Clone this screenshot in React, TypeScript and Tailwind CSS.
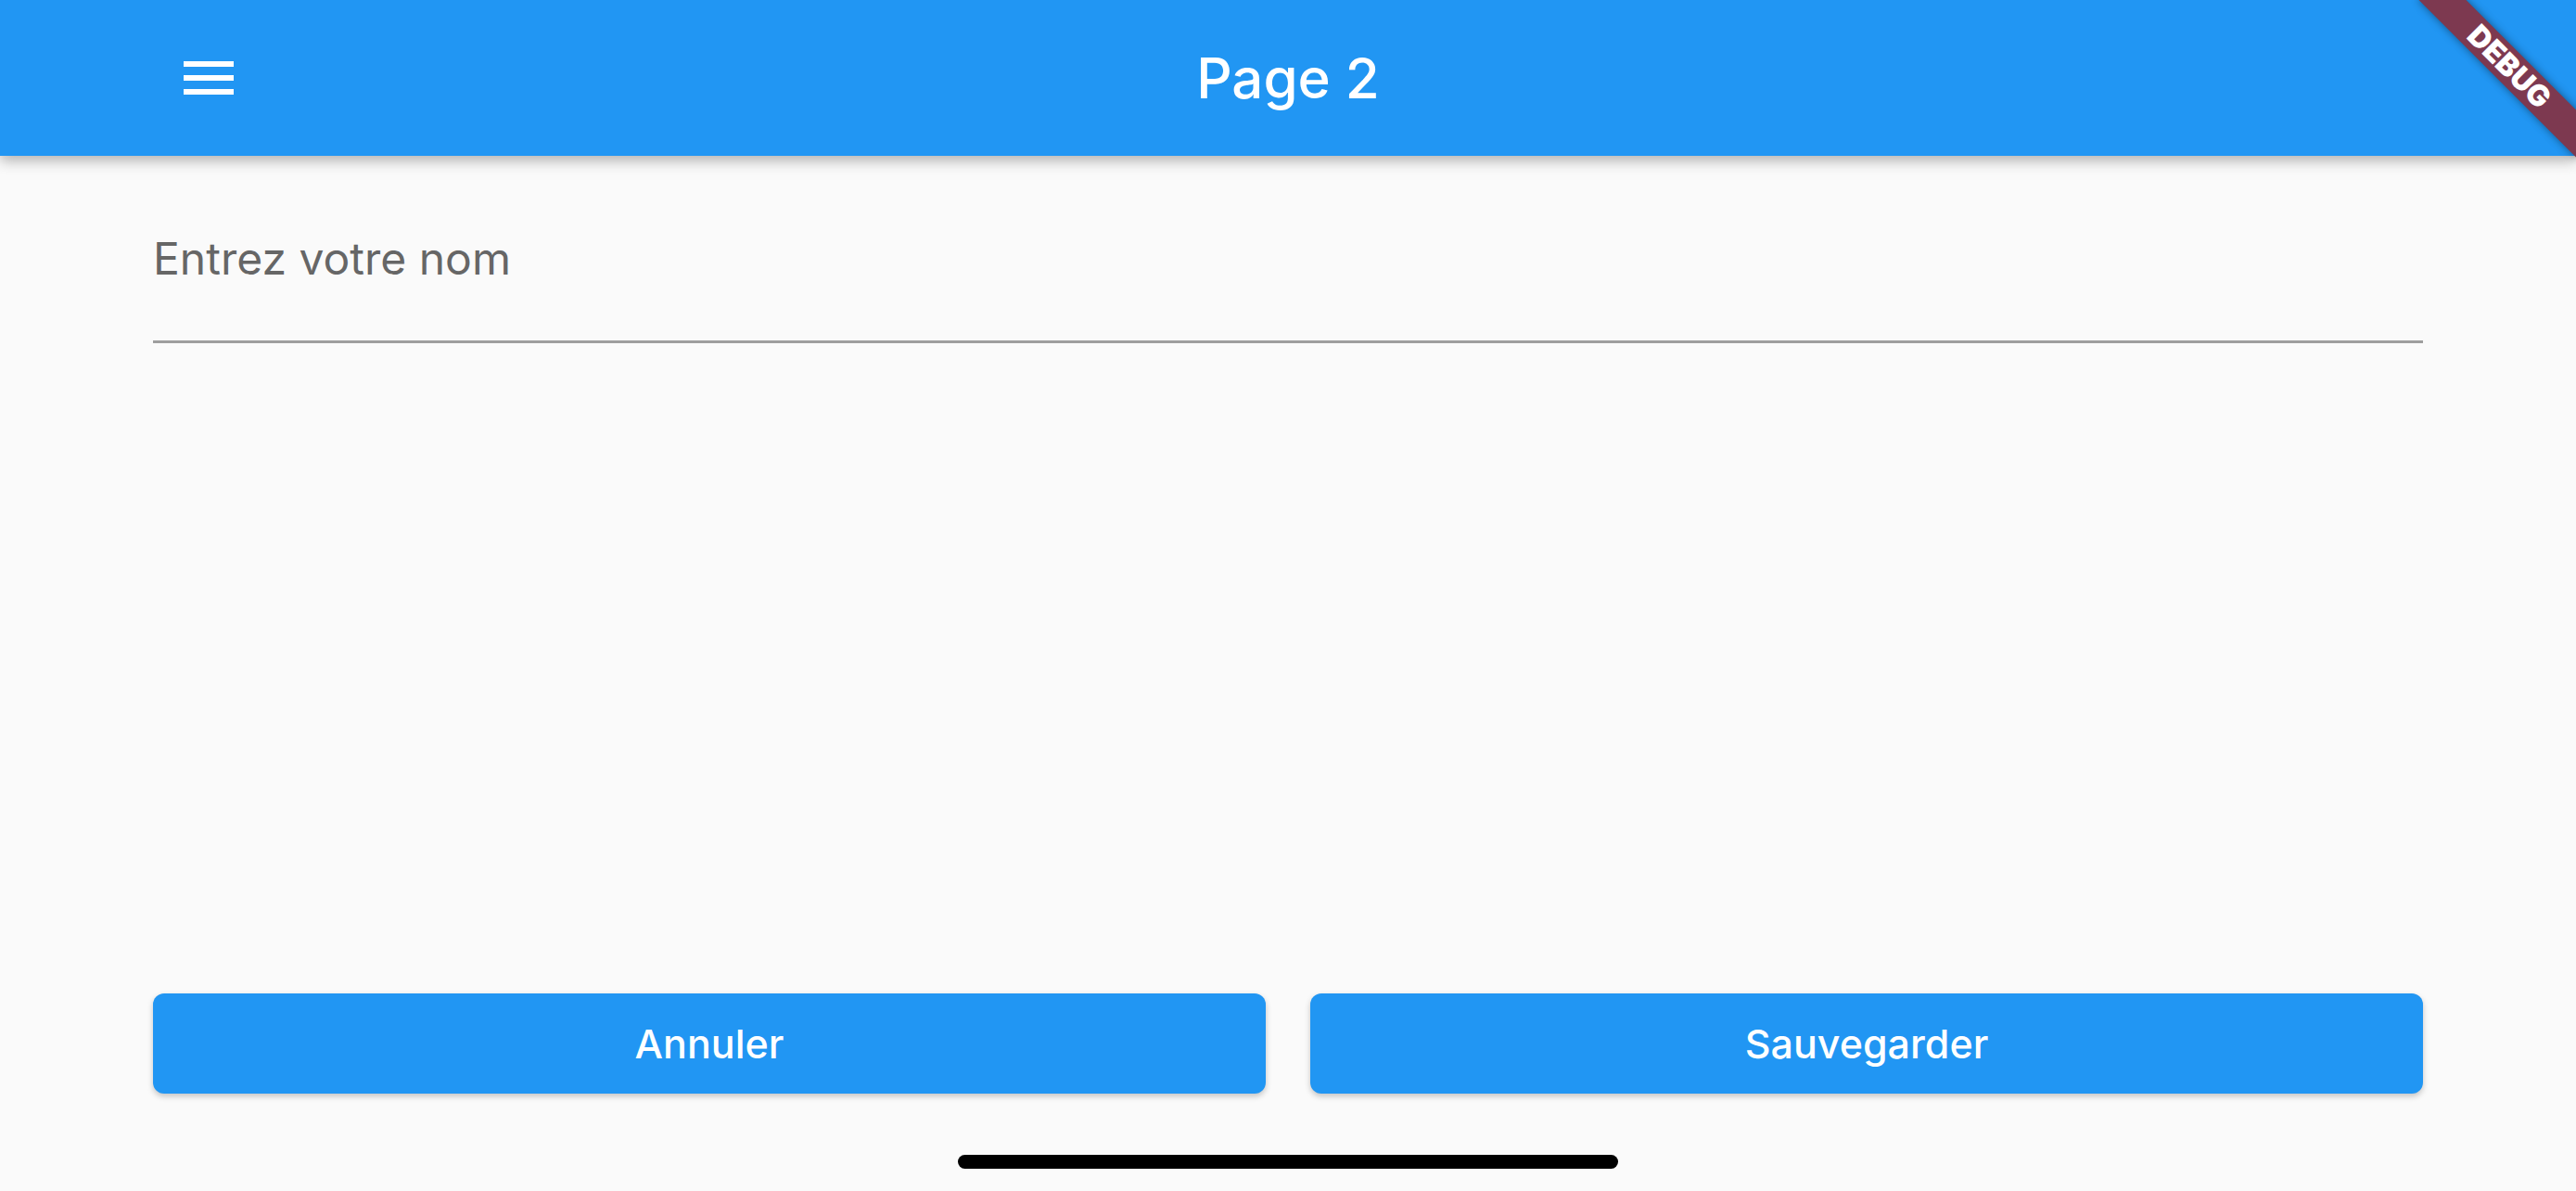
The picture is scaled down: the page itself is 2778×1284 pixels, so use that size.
const MenuIcon = () => (
  <svg width="72" height="72" viewBox="0 0 24 24" fill="#ffffff">
    <path d="M3 18h18v-2H3v2zm0-5h18v-2H3v2zm0-7v2h18V6H3z" />
  </svg>
);

export default function App() {
  return (
    <div className="relative flex h-[1284px] w-[2778px] flex-col overflow-hidden bg-[#fafafa] font-['Inter','Noto_Sans',sans-serif]">
      {/* App bar */}
      <header className="relative z-10 grid h-[168px] shrink-0 grid-cols-[1fr_auto_1fr] items-center bg-[#2196f3] shadow-[0_5px_14px_rgba(0,0,0,0.3)]">
        <div className="flex items-center pl-[189px]">
          <MenuIcon />
        </div>
        <h1 className="text-[60px] font-medium leading-[60px] text-white">Page 2</h1>
        <div />
      </header>

      {/* Debug ribbon */}
      <div className="absolute right-[-48px] top-[54px] z-20 flex h-[36px] w-[240px] rotate-45 items-center justify-center bg-[#7d3950] shadow-[0_0_10px_rgba(0,0,0,0.45)]">
        <span className="text-[32px] font-black leading-none text-white">DEBUG</span>
      </div>

      {/* Body */}
      <main className="flex flex-1 flex-col px-[165px]">
        <div className="border-b-[3px] border-[#9e9e9e] pb-[59px] pt-[82px]">
          <div className="text-[48px] leading-[58px] text-[#666666]">Entrez votre nom</div>
        </div>

        <div className="flex-1" />

        <div className="grid h-[108px] grid-cols-2 gap-[48px]">
          <button className="flex items-center justify-center rounded-[12px] bg-[#2196f3] text-[43px] font-medium text-white shadow-[0_3px_6px_rgba(0,0,0,0.22)]">
            Annuler
          </button>
          <button className="flex items-center justify-center rounded-[12px] bg-[#2196f3] text-[43px] font-medium text-white shadow-[0_3px_6px_rgba(0,0,0,0.22)]">
            Sauvegarder
          </button>
        </div>

        <div className="flex h-[105px] justify-center pt-[66px]">
          <div className="h-[15px] w-[712px] rounded-full bg-black" />
        </div>
      </main>
    </div>
  );
}
